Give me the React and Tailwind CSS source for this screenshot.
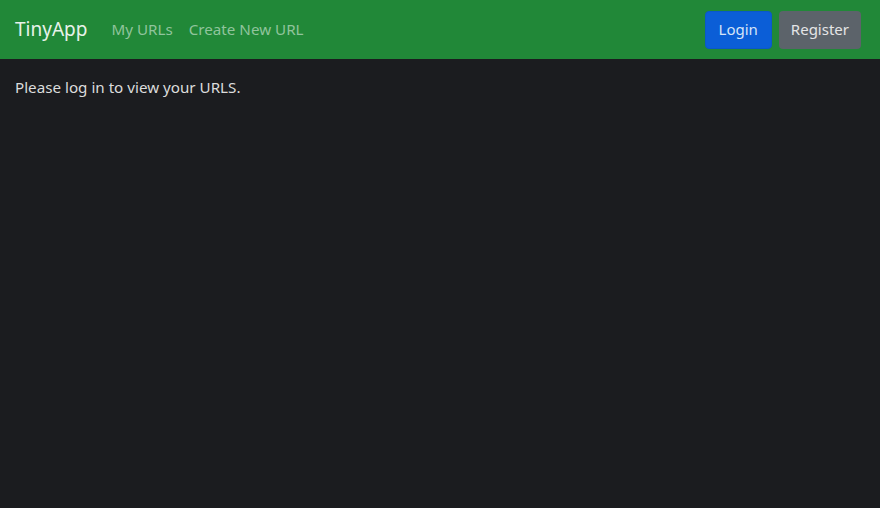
export default function App() {
  return (
    <div className="w-[880px] h-[508px] bg-[#1b1c1f] overflow-hidden" style={{ fontFamily: '"Noto Sans", "Open Sans", sans-serif' }}>
      <nav className="h-[59px] bg-[#218838] flex items-center justify-between pl-[15px] pr-[19px]">
        <div className="flex items-center">
          <span className="text-[19px] text-[#e8f2ea] mr-[24px]">TinyApp</span>
          <span className="text-[15.2px] text-[#90c49c] mr-[16px]">My URLs</span>
          <span className="text-[15.2px] text-[#90c49c]">Create New URL</span>
        </div>
        <div className="flex items-center gap-[7px]">
          <button className="h-[38px] px-[13px] rounded-[4px] bg-[#0b5ed7] border border-[#0a58ca] text-[15px] text-[#d6e4f7]">Login</button>
          <button className="h-[38px] px-[12px] rounded-[4px] bg-[#5c636a] text-[15px] text-[#e4e5e6]">Register</button>
        </div>
      </nav>
      <div className="px-[15px] pt-[17px] text-[15.2px] text-[#dcdcdc]">Please log in to view your URLS.</div>
    </div>
  );
}
